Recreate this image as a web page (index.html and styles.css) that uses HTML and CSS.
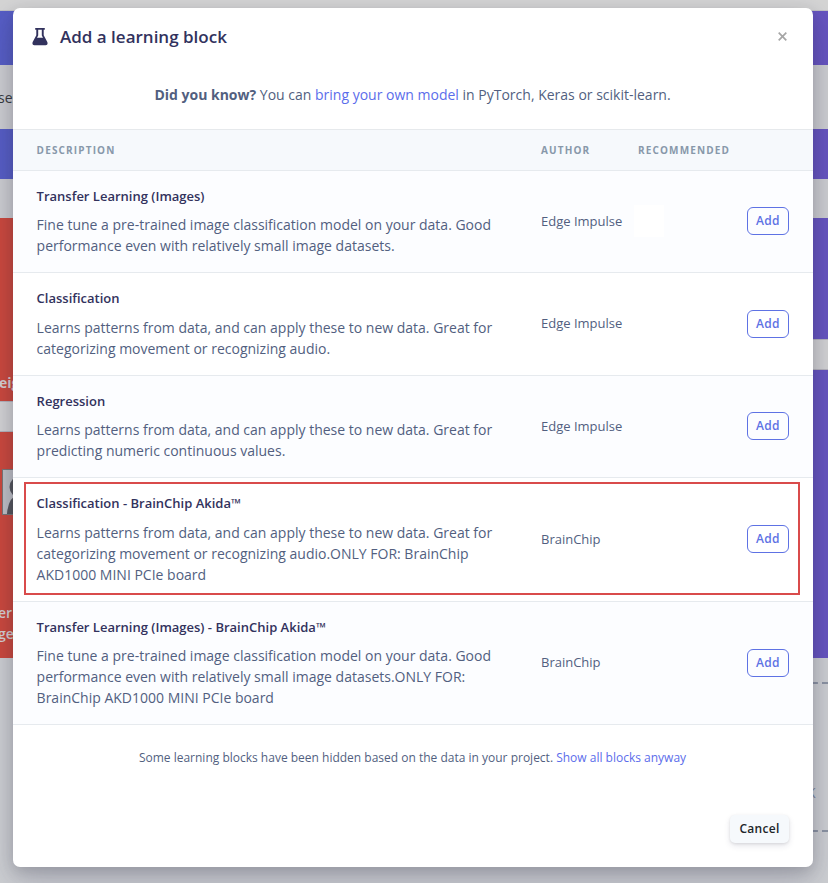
FILE: index.html
```html
<!DOCTYPE html>
<html lang="en">
<head>
<meta charset="utf-8">
<title>Add a learning block</title>
<link rel="stylesheet" href="styles.css">
</head>
<body>
<div class="page">
  <div class="topbar"></div>
  <div class="banner"></div>
  <div class="crumb"><span>ses</span></div>
  <div class="banner banner-small"></div>
  <div class="gap"></div>
  <div class="columns">
    <div class="card card-red">
      <div class="card-top"><b>eig</b></div>
      <div class="field"></div>
      <div class="card-body">
        <svg class="avatar" width="40" height="46" viewBox="0 0 40 46"><rect x=".5" y=".5" width="39" height="45" fill="#bfc1c5" stroke="#777"/><circle cx="18" cy="18" r="10.5" fill="#55565b"/><path d="M5 45Q6 29 16 25H24Q34 28 35 45Z" fill="#55565b"/></svg>
        <p>er b<br>ge</p>
      </div>
    </div>
    <div class="card card-purple">
      <div class="purple-top"></div>
      <div class="field"></div>
    </div>
  </div>
  <div class="below">
    <div class="dropzone">K</div>
  </div>
</div>

<section class="modal" role="dialog">
  <header class="modal-head">
    <svg class="flask" width="16" height="18" viewBox="0 0 16 18"><path fill="#32325d" fill-rule="evenodd" d="M3.2 0H12.8V1.8H11.7V7.3L15.3 14.1Q16.3 17.2 13.7 17.3H2.3Q-.3 17.2.7 14.1L4.3 7.3V1.8H3.2ZM6.2 1.8V7.6L5 9.8H11L9.8 7.6V1.8Z"/></svg>
    <h1>Add a learning block</h1>
    <svg class="close" width="9" height="9" viewBox="0 0 9 9"><path d="M.7.7L8.3 8.3M8.3.7L.7 8.3" stroke="#a6a6a6" stroke-width="1.7"/></svg>
  </header>
  <p class="hint"><strong>Did you know?</strong> You can <a>bring your own model</a> in PyTorch, Keras or scikit-learn.</p>
  <div class="table">
    <div class="row thead"><span>Description</span><span>Author</span><span>Recommended</span></div>
    <div class="row shaded">
      <div><h2>Transfer Learning (Images)</h2><p>Fine tune a pre-trained image classification model on your data. Good performance even with relatively small image datasets.</p></div>
      <span>Edge Impulse</span><i class="blank"></i><button>Add</button>
    </div>
    <div class="row tall">
      <div><h2>Classification</h2><p>Learns patterns from data, and can apply these to new data. Great for categorizing movement or recognizing audio.</p></div>
      <span>Edge Impulse</span><i></i><button>Add</button>
    </div>
    <div class="row shaded">
      <div><h2>Regression</h2><p>Learns patterns from data, and can apply these to new data. Great for predicting numeric continuous values.</p></div>
      <span>Edge Impulse</span><i></i><button>Add</button>
    </div>
    <div class="row tall three">
      <div><h2>Classification - BrainChip Akida™</h2><p>Learns patterns from data, and can apply these to new data. Great for categorizing movement or recognizing audio.ONLY FOR: BrainChip AKD1000 MINI PCIe board</p></div>
      <span>BrainChip</span><i></i><button>Add</button>
      <div class="highlight"></div>
    </div>
    <div class="row shaded three last">
      <div><h2>Transfer Learning (Images) - BrainChip Akida™</h2><p>Fine tune a pre-trained image classification model on your data. Good performance even with relatively small image datasets.ONLY FOR: BrainChip AKD1000 MINI PCIe board</p></div>
      <span>BrainChip</span><i></i><button>Add</button>
    </div>
  </div>
  <p class="note">Some learning blocks have been hidden based on the data in your project. <a>Show all blocks anyway</a></p>
  <footer><button class="cancel">Cancel</button></footer>
</section>
</body>
</html>
```

FILE: styles.css
```css
* { box-sizing: border-box; }
body { margin: 0; font-family: "Open Sans", sans-serif; color: #525f7f; height: 883px; overflow: hidden; }
h1, h2, p { margin: 0; }
a { color: #5b6deb; }

.page { display: flex; flex-direction: column; height: 883px; background: #cbcdd0; }
.topbar { height: 11px; background: #d4d4d4; border-bottom: 1px solid #c0c0c2; }
.banner { height: 54px; background: linear-gradient(90deg, #565dc4, #6654bf); }
.crumb { height: 64px; padding-top: 23px; font-size: 14px; line-height: 20px; color: #37393e; background: #cccdd0; }
.crumb span { margin-left: -2px; }
.banner-small { height: 50px; }
.gap { height: 39px; background: #cccdd0; }
.columns { display: flex; justify-content: space-between; height: 440px; }
.card { width: 200px; }
.card-red { background: #cb483c; color: #d5cfd0; }
.card-purple { background: #6654bf; }
.card-top { height: 183px; padding-top: 154px; font-size: 14px; line-height: 22px; }
.card-top b { margin-left: -1px; }
.field { height: 31px; background: #d2d2d3; border: solid #b5b3bb; border-width: 1px 0; }
.purple-top { height: 121px; }
.card-body { padding: 37px 0 0 2px; }
.avatar { display: block; }
.card-body p { margin: 87px 0 0 -4px; font-size: 14px; line-height: 21px; font-weight: 600; }
.below { flex: 1; padding: 24px 0 0 600px; background: #ccced1; }
.dropzone { height: 150px; padding: 99px 0 0 207px; border: dashed #8b93a2; border-width: 2px 0; font-size: 14px; line-height: 20px; color: #7e889d; }

.modal { position: absolute; left: 13px; top: 8px; width: 800px; height: 859px; display: flex; flex-direction: column; background: #fff; border-radius: 7px; box-shadow: 0 15px 35px rgba(50, 50, 93, .2), 0 5px 15px rgba(0, 0, 0, .17); }
.modal-head { display: flex; align-items: center; height: 57px; padding: 0 26px 0 19px; }
.flask { margin-right: 12px; }
h1 { flex: 1; font-size: 17px; line-height: 25px; font-weight: 600; color: #32325d; }
.hint { height: 64px; padding: 19px 1px 0 0; font-size: 14px; line-height: 21px; text-align: center; white-space: nowrap; }
.hint strong { font-weight: 700; }
.row { position: relative; display: grid; grid-template-columns: 504.4px 93px 113px 42px; align-items: center; height: 102px; padding: 0 24px 1px 23.6px; border-top: 1px solid #e6eaee; font-size: 13px; }
.row > span { margin-top: -1px; }
.row.thead { height: 41px; padding-bottom: 0; background: #f6f9fc; color: #8898aa; font-size: 10px; font-weight: 700; letter-spacing: 1.15px; text-transform: uppercase; border-color: #e6e9ec; }
.thead span:nth-child(3) { margin-left: 4px; }
.row.tall { height: 103px; padding-bottom: 2px; }
.row.three { height: 124px; }
.tall button { margin-top: 1px; }
.tall.three > span { margin-top: 0; }
.tall.three button { margin-top: 0; }
.last { border-bottom: 1px solid #e6eaee; }
.shaded { background: #fcfdff; }
h2 { margin-bottom: 8px; font-size: 13px; line-height: 20px; font-weight: 600; color: #32325d; }
.tall h2 { margin-bottom: 9px; }
.row p { width: 460px; font-size: 14px; line-height: 21px; }
.blank { width: 30px; height: 32px; background: #fff; }
button { font-family: inherit; font-size: 12px; font-weight: 600; line-height: 18px; letter-spacing: .3px; height: 28px; padding: 0; }
.row button { width: 42px; border: 1px solid #5e72e4; border-radius: 6px; background: transparent; color: #5e72e4; }
.highlight { position: absolute; left: 11px; top: 4px; width: 776px; height: 113px; border: 2px solid #d94b4b; }
.note { padding: 23px 1px 0 0; font-size: 12px; line-height: 20px; text-align: center; }
footer { display: flex; justify-content: flex-end; margin: auto 24px 24px 0; }
.cancel { width: 59px; border: 0; border-radius: 5px; background: #f6f9fc; color: #212529; box-shadow: 0 3px 6px rgba(50, 50, 93, .11), 0 1px 3px rgba(0, 0, 0, .1); }
```
